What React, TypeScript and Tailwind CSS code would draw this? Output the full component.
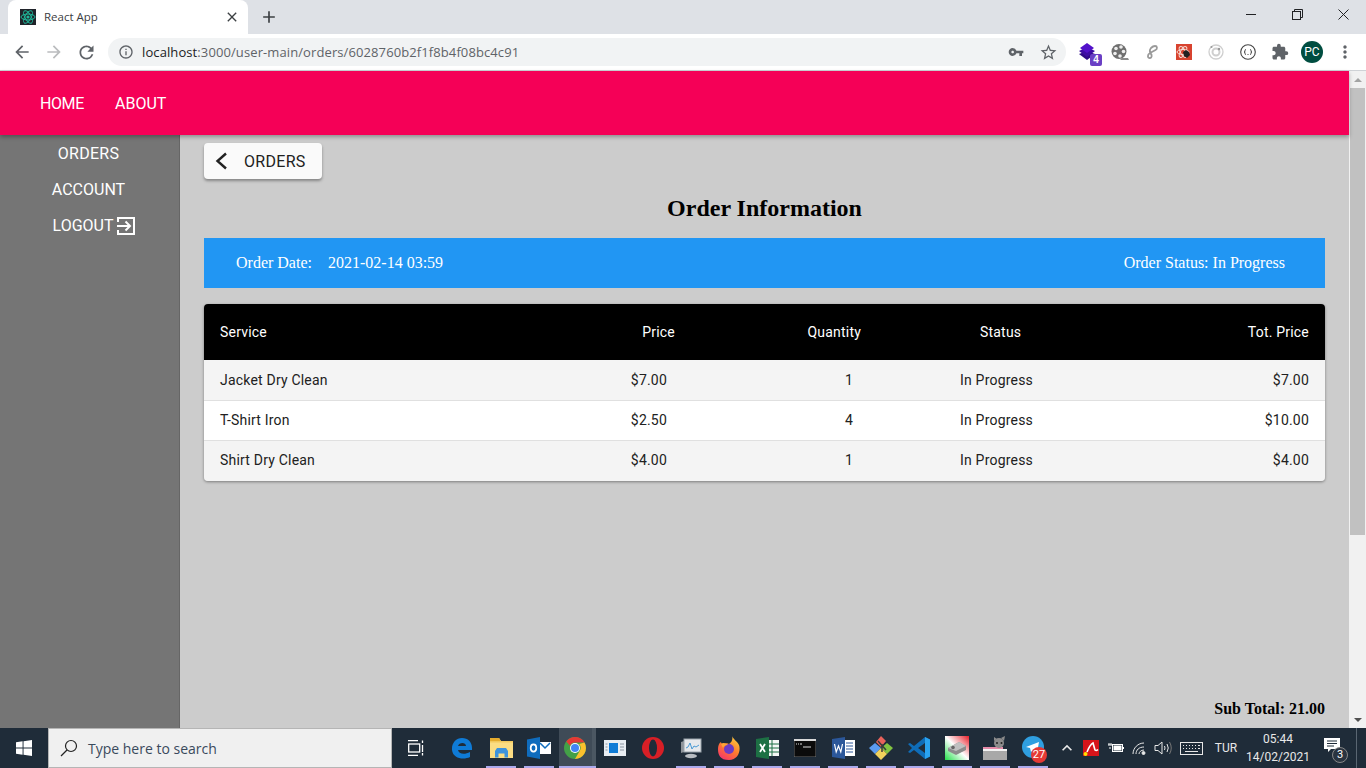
import React from "react";
import { MdArrowBack, MdArrowForward, MdRefresh, MdInfoOutline, MdVpnKey, MdStarBorder, MdExtension, MdMoreVert, MdClose, MdAdd, MdExpandLess } from "react-icons/md";

const rows = [
  { s: "Jacket Dry Clean", p: "$7.00", q: "1", st: "In Progress", t: "$7.00", cls: "h-[41px] bg-[#f4f4f4] border-b border-[#e0e0e0]" },
  { s: "T-Shirt Iron", p: "$2.50", q: "4", st: "In Progress", t: "$10.00", cls: "h-[40px] bg-white border-b border-[#e0e0e0]" },
  { s: "Shirt Dry Clean", p: "$4.00", q: "1", st: "In Progress", t: "$4.00", cls: "h-[40px] bg-[#f4f4f4] pb-[2px]" },
];
const grid = "grid grid-cols-[376px_111px_186px_223px_225px] items-center tracking-[0.2px]";

function ReactFav() {
  return (
    <svg width="16" height="16" viewBox="0 0 16 16" className="shrink-0">
      <rect width="16" height="16" fill="#20232a" />
      <g fill="none" stroke="#1fb89a" strokeWidth="1">
        <ellipse cx="8" cy="8" rx="7" ry="3" />
        <ellipse cx="8" cy="8" rx="7" ry="3" transform="rotate(60 8 8)" />
        <ellipse cx="8" cy="8" rx="7" ry="3" transform="rotate(120 8 8)" />
      </g>
      <circle cx="8" cy="8" r="1.6" fill="#1fb89a" />
    </svg>
  );
}

function TabBar() {
  return (
    <div className="h-[34px] bg-[#dee1e6] flex pl-[8px] shrink-0">
      <div className="w-[240px] h-[34px] bg-white rounded-t-[8px] flex items-center pl-[12px] pr-[8px]">
        <ReactFav />
        <span className="ml-[8px] text-[11.5px] text-[#3c4043] font-['Open_Sans','Noto_Sans',sans-serif] flex-1">React App</span>
        <MdClose size={16} className="text-[#3c4043]" />
      </div>
      <div className="h-[34px] flex items-center ml-[11px]">
        <MdAdd size={20} className="text-[#3c4043]" />
      </div>
      <div className="flex-1" />
      <div className="flex items-start text-[#202124]">
        <div className="w-[46px] h-[28px] flex items-center justify-center">
          <div className="w-[10px] h-px bg-[#202124]" />
        </div>
        <div className="w-[46px] h-[28px] flex items-center justify-center">
          <svg width="11" height="11" viewBox="0 0 11 11" fill="none" stroke="#202124">
            <rect x="0.5" y="2.5" width="8" height="8" />
            <path d="M2.5 2.5v-2h8v8h-2" />
          </svg>
        </div>
        <div className="w-[46px] h-[28px] flex items-center justify-center">
          <svg width="11" height="11" viewBox="0 0 11 11" stroke="#202124" fill="none">
            <path d="M0.5 0.5l10 10M10.5 0.5l-10 10" />
          </svg>
        </div>
      </div>
    </div>
  );
}

function Ext({ children, className = "w-[32px]" }: { children: React.ReactNode; className?: string }) {
  return <div className={"h-[36px] flex items-center justify-center relative " + className}>{children}</div>;
}

function Toolbar() {
  return (
    <div className="h-[36px] bg-white flex items-center shrink-0">
      <div className="w-[108px] flex items-center pl-[12px] gap-[12px] shrink-0">
        <MdArrowBack size={20} className="text-[#5f6368]" />
        <MdArrowForward size={20} className="text-[#babcbe]" />
        <MdRefresh size={21} className="text-[#5f6368]" />
      </div>
      <div className="w-[958px] h-[28px] rounded-full bg-[#f1f3f4] flex items-center pl-[10px] pr-[8px] shrink-0">
        <MdInfoOutline size={16} className="text-[#5f6368]" />
        <span className="ml-[8px] text-[13px] tracking-[0.1px] text-[#5f6368] font-['Open_Sans','Noto_Sans',sans-serif] flex-1 leading-none">
          <span className="text-[#202124]">localhost</span>:3000/user-main/orders/6028760b2f1f8b4f08bc4c91
        </span>
        <MdVpnKey size={16} className="text-[#5f6368] mr-[15px]" />
        <MdStarBorder size={19} className="text-[#5f6368]" />
      </div>
      <div className="flex items-center ml-[6px]">
        <Ext>
          <svg width="18" height="17" viewBox="0 0 18 17" className="-ml-[2px] -mt-[2px]">
            <path d="M9 8 17 11 9 17 1 11z" fill="#2e0a85" />
            <path d="M9 4 17 8 9 14 1 8z" fill="#3d0ca3" />
            <path d="M9 0 16 5 9 10 2 5z" fill="#5211c9" />
          </svg>
          <span className="absolute left-[18px] top-[20px] w-[12px] h-[12px] rounded-[2px] bg-[#6a3fc4] text-white text-[10px] font-bold leading-[12px] text-center font-['Liberation_Sans',sans-serif]">4</span>
        </Ext>
        <Ext>
          <svg width="18" height="18" viewBox="0 0 18 18">
            <path d="M11 15h6l1 2h-9z" fill="#8a8a8a" />
            <circle cx="8" cy="8.5" r="7.5" fill="#6f6f6f" />
            <circle cx="5" cy="5.500" r="1.800" fill="#eee" />
            <circle cx="10" cy="4" r="1.800" fill="#eee" />
            <circle cx="4" cy="10.500" r="1.800" fill="#eee" />
            <circle cx="9" cy="13" r="1.800" fill="#eee" />
            <circle cx="12.500" cy="8.500" r="1.800" fill="#eee" />
          </svg>
        </Ext>
        <Ext>
          <svg width="14" height="16" viewBox="0 0 14 16" fill="none" stroke="#9a9a9a" strokeWidth="1.8">
            <path d="M10 2c2.500 0 2.500 3 .5 4L5 9c-3 1.500-2.500 5.500 0 5 2-.3 2-3 1-4-1.500-2-2-3.500 0-6 1-1 2.500-2 4-2z" />
          </svg>
        </Ext>
        <Ext>
          <svg width="16" height="16" viewBox="0 0 16 16">
            <rect width="16" height="16" fill="#d8432f" />
            <g fill="none" stroke="#f6d9d2" strokeWidth="1">
              <ellipse cx="7" cy="8" rx="6" ry="2.500" />
              <ellipse cx="7" cy="8" rx="6" ry="2.500" transform="rotate(60 7 8)" />
              <ellipse cx="7" cy="8" rx="6" ry="2.500" transform="rotate(120 7 8)" />
            </g>
            <path d="M7 8l3-2 3 2 1 3-3 3-3-2z" fill="#222" />
          </svg>
        </Ext>
        <Ext>
          <svg width="16" height="16" viewBox="0 0 16 16" fill="none" stroke="#cfcfcf">
            <circle cx="8" cy="8" r="7" strokeWidth="1.3" />
            <circle cx="8" cy="8" r="3.500" strokeWidth="2" />
            <circle cx="11" cy="5" r="1.200" fill="#999" stroke="none" />
            <circle cx="3.500" cy="3" r="1" fill="#999" stroke="none" />
          </svg>
        </Ext>
        <Ext>
          <svg width="16" height="16" viewBox="0 0 16 16" fill="none" stroke="#444">
            <circle cx="8" cy="8" r="7.3" strokeWidth="1.1" />
            <path d="M6 5.500q-1 0-1 1v1l-1 .5 1 .5v1q0 1 1 1M10 5.500q1 0 1 1v1l1 .5-1 .5v1q0 1-1 1M7 10.500h.5M8.500 10.500h.5" strokeWidth="1" />
          </svg>
        </Ext>
        <Ext><MdExtension size={18} className="text-[#5f6368]" /></Ext>
        <Ext>
          <div className="w-[22px] h-[22px] rounded-full bg-[#004d40] text-white text-[12px] flex items-center justify-center font-['Roboto',sans-serif]">PC</div>
        </Ext>
        <Ext className="w-[34px]"><MdMoreVert size={20} className="text-[#5f6368]" /></Ext>
      </div>
    </div>
  );
}

function Sidebar() {
  const item = "h-[36px] flex items-center justify-center text-white text-[16px]";
  return (
    <div className="w-[180px] shrink-0 bg-[#757575] border-r border-[#666] pr-[2px] pt-px flex flex-col">
      <div className={item + " tracking-[0.3px]"}>ORDERS</div>
      <div className={item}>ACCOUNT</div>
      <div className={item + " pl-[12px]"}>
        LOGOUT
        <svg width="20" height="20" viewBox="0 0 20 20" fill="none" stroke="#fff" strokeWidth="2" className="ml-[3px]">
          <path d="M2 6V2h16v16H2v-4" />
          <path d="M1 10h13M9.500 5.500 14 10l-4.500 4.500" />
        </svg>
      </div>
    </div>
  );
}

function Content() {
  return (
    <div className="flex-1 bg-[#cccccc] px-[24px] pt-[8px] flex flex-col font-['Liberation_Serif',serif]">
      <div className="w-[118px] h-[36px] bg-[#fafafa] rounded-[4px] shadow-[0_2px_3px_rgba(0,0,0,0.35)] flex items-center pl-[10px] font-['Roboto',sans-serif] text-[16px]">
        <svg width="14" height="18" viewBox="0 0 14 18" fill="none" stroke="#222" strokeWidth="2.4"><path d="M12 1.500 3.500 9 12 16.500" /></svg>
        <span className="ml-[16px] pt-[2px] text-[#212121] tracking-[0.3px]">ORDERS</span>
      </div>
      <h1 className="text-center text-[24px] font-bold text-black leading-[28px] mt-[15px]">Order Information</h1>
      <div className="mt-[16px] h-[50px] bg-[#2196f3] text-white text-[16px] flex items-center pl-[32px] pr-[40px]">
        <span>Order Date:</span>
        <span className="ml-[16px]">2021-02-14 03:59</span>
        <span className="ml-auto">Order Status: In Progress</span>
      </div>
      <div className="mt-[16px] rounded-[4px] overflow-hidden shadow-[0_1px_3px_rgba(0,0,0,0.4)] font-['Roboto',sans-serif] text-[14px]">
        <div className={grid + " h-[56px] bg-black text-white"}>
          <div className="pl-[16px]">Service</div>
          <div className="text-right pr-[16px]">Price</div>
          <div className="text-right pr-[16px]">Quantity</div>
          <div className="pl-[103px]">Status</div>
          <div className="text-right pr-[16px]">Tot. Price</div>
        </div>
        {rows.map((r) => (
          <div key={r.s} className={grid + " text-[#212121] " + r.cls}>
            <div className="pl-[16px]">{r.s}</div>
            <div className="text-right pr-[24px]">{r.p}</div>
            <div className="text-right pr-[24px]">{r.q}</div>
            <div className="pl-[83px]">{r.st}</div>
            <div className="text-right pr-[16px]">{r.t}</div>
          </div>
        ))}
      </div>
      <div className="mt-auto mb-[10px] text-right text-[16px] font-bold text-black leading-[18px]">Sub Total: 21.00</div>
    </div>
  );
}

function Scrollbar() {
  return (
    <div className="w-[17px] shrink-0 bg-[#f1f1f1] flex flex-col items-center">
      <div className="h-[17px] flex items-center justify-center">
        <div className="w-0 h-0 border-x-[4px] border-x-transparent border-b-[4px] border-b-[#a3a3a3]" />
      </div>
      <div className="w-[15px] h-[447px] bg-[#c1c1c1]" />
      <div className="flex-1" />
      <div className="h-[17px] flex items-center justify-center">
        <div className="w-0 h-0 border-x-[4px] border-x-transparent border-t-[4px] border-t-[#505050]" />
      </div>
    </div>
  );
}

function Slot({ on, active, w = 38, children }: { on?: boolean; active?: boolean; w?: number; children: React.ReactNode }) {
  return (
    <div style={{ width: w }} className={"h-[40px] flex items-center justify-center relative shrink-0 " + (active ? "bg-[#3f4b57]" : "")}>
      {children}
      {active && <div className="absolute top-0 bottom-0 right-0 w-[4px] bg-[#4b5762]" />}
      {on && <div className={"absolute bottom-0 h-[2px] bg-[#aaa9ec] " + (active ? "left-0 right-0" : "left-[4px] right-[4px]")} />}
    </div>
  );
}

function Taskbar() {
  return (
    <div className="h-[40px] bg-[#1f2c39] flex items-center shrink-0 text-white">
      <div className="w-[48px] h-[40px] flex items-center justify-center">
        <svg width="16" height="16" viewBox="0 0 17 17" fill="#fff"><path d="M0 2.400 7 1.400v6.700H0zM8 1.300 17 0v8.100H8zM0 9h7v6.700l-7-1zM8 9h9v8l-9-1.300z" /></svg>
      </div>
      <div className="w-[344px] h-[40px] bg-[#f0f0f0] border border-[#b5b5b5] flex items-center pl-[11px] text-[#3a4a5c] text-[14px] font-['Open_Sans','Noto_Sans',sans-serif]">
        <svg width="18" height="18" viewBox="0 0 18 18" fill="none" stroke="#222" strokeWidth="1.2"><circle cx="11" cy="7" r="5.500" /><path d="M7 11 1 17" /></svg>
        <span className="ml-[10px]">Type here to search</span>
      </div>
      <div className="flex items-center pl-[5px]">
        <Slot>
          <svg width="18" height="16" viewBox="0 0 18 16" fill="none" stroke="#fff" strokeWidth="1.3"><path d="M1 .7h10M1 15.300h10" /><rect x="1.700" y="4" width="11" height="8" /><path d="M15.500.5v2.500M15.500 5v7M15.500 13v2.500" /></svg>
        </Slot>
        <div className="w-[9px]" />
        <Slot>
          <svg width="22" height="22" viewBox="0 0 22 22" className="-ml-[2px]"><path d="M11 1c6 0 10 4 10 10v2H7c.5 4 6.500 5 12 2v5c-6 3-17 2-18-7C.5 6 5 1 11 1zm4 8c0-4-7-4-8 0z" fill="#0f7bd6" /></svg>
        </Slot>
        <Slot on>
          <svg width="23" height="20" viewBox="0 0 23 20">
            <path d="M0 0h9l2 3h12v17H0z" fill="#fbdd83" />
            <path d="M0 0h9l2 3H0z" fill="#e5ac2e" />
            <path d="M0 3h23v1.500H0z" fill="#f2c95c" />
            <path d="M5 19.500v-6.500l2-3h9l2 3v6.500h-3.500v-4h-6v4z" fill="#3d93dc" />
          </svg>
        </Slot>
        <Slot on>
          <svg width="24" height="22" viewBox="0 0 24 22">
            <rect x="12" y="5" width="12" height="12" fill="#fff" />
            <path d="M13 6l5 5 5-5" stroke="#0f6cbd" strokeWidth="1.500" fill="none" />
            <path d="M0 2.500 13 0v22L0 19.500z" fill="#0f6cbd" />
            <ellipse cx="6.500" cy="11" rx="2.800" ry="3.600" fill="none" stroke="#fff" strokeWidth="1.700" />
          </svg>
        </Slot>
        <div className="w-px" />
        <Slot on active w={37}>
          <svg width="22" height="22" viewBox="0 0 22 22" className="-ml-[6px] relative z-10">
            <circle cx="11" cy="11" r="11" fill="#43a047" />
            <path d="M11 0a11 11 0 0 1 9.530 5.500H11a5.500 5.500 0 0 0-5 3.200L2.300 4.500A11 11 0 0 1 11 0z" fill="#e53935" />
            <path d="M20.500 5.500A11 11 0 0 1 11 22l4.800-8.300A5.500 5.500 0 0 0 15 7z" fill="#fbc02d" />
            <circle cx="11" cy="11" r="5" fill="#fff" />
            <circle cx="11" cy="11" r="4" fill="#4285f4" />
          </svg>
        </Slot>
        <Slot>
          <svg width="22" height="16" viewBox="0 0 22 16"><rect width="22" height="16" fill="#e8edf2" /><rect x="5" y="3" width="9" height="10" fill="#0f7bd6" /><path d="M16 4h4M16 7h4M16 10h4M1.500 4h2M1.500 7h2M1.500 10h2" stroke="#8a94a0" /></svg>
        </Slot>
        <Slot>
          <svg width="22" height="22" viewBox="0 0 22 22"><circle cx="11" cy="11" r="11" fill="#d81f26" /><ellipse cx="11" cy="11" rx="4" ry="8.500" fill="#1f2c39" /></svg>
        </Slot>
        <Slot on>
          <svg width="22" height="22" viewBox="0 0 22 22">
            <path d="M1 5l3-1v11l-3 1z" fill="#8e949a" />
            <rect x="4" y="2" width="17" height="13" fill="#e6e9ec" stroke="#9aa3ab" />
            <path d="M6 11l2-1 2-4 2 6 2-3 2 1 3-2" stroke="#4a9ad4" fill="none" />
            <ellipse cx="11" cy="19" rx="6" ry="2.200" fill="#b8bdc2" />
          </svg>
        </Slot>
        <Slot on>
          <svg width="22" height="24" viewBox="0 0 22 24">
            <defs>
              <linearGradient id="ff" x1="0.800" y1="0" x2="0.200" y2="1">
                <stop offset="0" stopColor="#ffd03f" />
                <stop offset=".5" stopColor="#ff7b2e" />
                <stop offset="1" stopColor="#f7336c" />
              </linearGradient>
            </defs>
            <path d="M14 0c1 3 5 5 7 9 2 6-1 15-10 15S0 19 0 13c0-3 1-6 3-7 0 1 1 2 2 2 2-1 5-1 6 0 3-2 4-5 3-8z" fill="url(#ff)" />
            <circle cx="11" cy="13" r="5" fill="#6d3bc4" />
            <path d="M3 8c2-2 5-1 7 1-3 0-4 1-5 3z" fill="#ffa436" />
          </svg>
        </Slot>
        <Slot on>
          <svg width="23" height="22" viewBox="0 0 23 22">
            <rect x="10" y="3" width="13" height="16" fill="#f4f7f5" />
            <path d="M16 3v16M10 7h13M10 11h13M10 15h13" stroke="#1d7044" />
            <path d="M0 2 13 0v22L0 20z" fill="#1d7044" />
            <path d="M4 7l5 8M9 7l-5 8" stroke="#fff" strokeWidth="1.800" />
          </svg>
        </Slot>
        <Slot on>
          <svg width="22" height="18" viewBox="0 0 22 18">
            <rect width="22" height="18" fill="#0b0b0b" stroke="#aaa" strokeWidth=".6" />
            <rect width="22" height="2" fill="#d9d9d9" />
            <path d="M2 5h1M4 5h1M6 5h2M9 8h8" stroke="#ddd" />
          </svg>
        </Slot>
        <Slot on>
          <svg width="23" height="22" viewBox="0 0 23 22">
            <rect x="9" y="3" width="14" height="16" fill="#fff" />
            <path d="M14 6h7M14 9h7M14 12h7M14 15h7" stroke="#2b579a" />
            <path d="M0 2 13 0v22L0 20z" fill="#2b579a" />
            <path d="M2.500 7l1.700 8L6.500 9l2.300 6 1.700-8" stroke="#fff" strokeWidth="1.200" fill="none" />
          </svg>
        </Slot>
        <Slot on>
          <svg width="24" height="24" viewBox="0 0 24 24">
            <path d="M6 7l6 5-6 6-6-6z" fill="#5b9bf0" />
            <path d="M18 7l6 5-6 6-6-6z" fill="#82c341" />
            <path d="M12 12l6 6-6 6-6-6z" fill="#f2d25c" />
            <path d="M7 6l5-6 5 5-5 6z" fill="#e8625b" />
            <path d="M9 5l8 9M13 8v8" stroke="#3a3a3a" strokeWidth="1.500" fill="none" />
          </svg>
        </Slot>
        <Slot on>
          <svg width="24" height="24" viewBox="0 0 24 24">
            <path fillRule="evenodd" d="M18 1 7 10 3 7 1 8l4 4-4 4 2 1 4-3 11 9 5-2.500v-17zM18 7v10l-7-5z" fill="#0f6db8" />
            <path d="M18 1l5 2.500v17L18 23z" fill="#2aa3f0" />
          </svg>
        </Slot>
        <Slot on>
          <svg width="24" height="24" viewBox="0 0 24 24">
            <defs>
              <linearGradient id="g" x1="0" y1="1" x2="1" y2="0">
                <stop offset="0" stopColor="#22e04a" />
                <stop offset=".5" stopColor="#fff" />
                <stop offset="1" stopColor="#e8202a" />
              </linearGradient>
            </defs>
            <rect width="24" height="24" fill="url(#g)" />
            <path d="M3 12l11-6 7 4v4l-10 5-8-4z" fill="#8c8c8c" />
            <path d="M3 12l11-6 7 4-10 5z" fill="#c0c0c0" />
            <circle cx="8" cy="11.500" r="1.800" fill="#666" />
          </svg>
        </Slot>
        <Slot on>
          <svg width="24" height="24" viewBox="0 0 24 24">
            <rect y="13" width="24" height="11" fill="#a8a8a8" />
            <rect y="13" width="24" height="2" fill="#f2f2f2" />
            <rect y="11" width="20" height="2" fill="#e58aa8" />
            <circle cx="16" cy="7" r="5" fill="#8b8b8b" />
            <path d="M11 5l0-4 3 2M21 5l1-5-4 2" fill="#8b8b8b" />
            <circle cx="14" cy="7" r="1" fill="#222" />
            <circle cx="18.500" cy="7" r="1" fill="#222" />
          </svg>
        </Slot>
        <Slot on>
          <svg width="22" height="22" viewBox="0 0 22 22" className="-mt-[2px]">
            <circle cx="11" cy="11" r="11" fill="#2f9fe0" />
            <path d="M4 11l13-5-2 11-4-3-2 2-1-4z" fill="#fff" />
          </svg>
          <span className="absolute left-[17px] top-[19px] w-[16px] h-[16px] rounded-full bg-[#e53935] text-white text-[11px] leading-[16px] text-center font-['Roboto',sans-serif]">27</span>
        </Slot>
      </div>
      <div className="flex-1" />
      <div className="flex items-center h-[40px] font-['Roboto',sans-serif] text-[#e8e8e8]">
        <div className="w-[22px] flex justify-center"><MdExpandLess size={20} /></div>
        <div className="w-[26px] flex justify-center">
          <svg width="16" height="16" viewBox="0 0 16 16"><rect width="16" height="16" fill="#d7141a" /><path d="M4 12C6 7 8 4 10 3l2 7c1 1 2 .5 3-.5" fill="none" stroke="#fff" strokeWidth="1.6" /><circle cx="2.500" cy="14" r="2" fill="#ffe000" /></svg>
        </div>
        <div className="w-[24px] flex justify-center">
          <svg width="18" height="12" viewBox="0 0 18 12" fill="none" stroke="#fff"><path d="M1 3h4M2 1v2M4 1v2M3 5v2" /><rect x="5.500" y="2.500" width="10" height="7" /><rect x="7" y="4" width="7" height="4" fill="#fff" /><path d="M16.500 5v2" /></svg>
        </div>
        <div className="w-[24px] flex justify-center">
          <svg width="16" height="14" viewBox="0 0 16 14" fill="none" stroke="#e8e8e8"><path d="M1 13C1 7 6 2 12 2M4 13c0-4 3-7 8-7M7 13c0-2 2-4 5-4" /><circle cx="11.500" cy="12" r="1.500" fill="#e8e8e8" /></svg>
        </div>
        <div className="w-[22px] flex justify-center">
          <svg width="18" height="14" viewBox="0 0 18 14" fill="none" stroke="#e8e8e8"><path d="M1 4.500h3L8 1v12L4 9.500H1z" /><path d="M10.500 5q1 2 0 4M13 3q2.500 4 0 8" /><path d="M15.500 1q3.500 6 0 12" stroke="#777" /></svg>
        </div>
        <div className="w-[34px] flex justify-center">
          <svg width="23" height="13" viewBox="0 0 23 13" fill="none" stroke="#e8e8e8"><rect x=".5" y=".5" width="22" height="12" /><path d="M3 3.500h1M6 3.500h1M9 3.500h1M12 3.500h1M15 3.500h1M18 3.500h2M3 6.500h1M6 6.500h1M9 6.500h1M12 6.500h1M15 6.500h1M18 6.500h2M5 9.500h13" /></svg>
        </div>
        <div className="w-[36px] text-center text-[12px]">TUR</div>
        <div className="w-[68px] text-center text-[12px] leading-[18px]">
          <div>05:44</div>
          <div>14/02/2021</div>
        </div>
        <div className="w-[44px] h-[40px] flex justify-center items-center relative pr-[4px]">
          <svg width="16" height="15" viewBox="0 0 16 15" className="-mt-[6px]"><path d="M0 0h16v11H7l-3 3v-3H0z" fill="#fff" /><path d="M3 3h10M3 5.500h10M3 8h7" stroke="#1f2c39" /></svg>
          <span className="absolute left-[20px] top-[19px] w-[16px] h-[16px] rounded-full bg-[#2a3440] border border-[#888] text-white text-[11px] leading-[14px] text-center">3</span>
        </div>
        <div className="w-[10px] h-[40px] border-l border-[#5a6672]" />
      </div>
    </div>
  );
}

export default function App() {
  return (
    <div className="w-[1366px] h-[768px] overflow-hidden flex flex-col font-['Roboto',sans-serif]">
      <TabBar />
      <Toolbar />
      <div className="h-px bg-[#cfd2d6] shrink-0" />
      <div className="flex-1 flex min-h-0">
        <div className="flex-1 flex flex-col min-w-0">
          <div className="h-[64px] shrink-0 bg-[#f50057] flex items-center pl-[40px] pt-[2px] text-white text-[16px] relative z-10 shadow-[0_2px_4px_rgba(0,0,0,0.3)]">
            <span className="w-[75px] tracking-[-0.4px]">HOME</span>
            <span>ABOUT</span>
          </div>
          <div className="flex-1 flex min-h-0">
            <Sidebar />
            <Content />
          </div>
        </div>
        <Scrollbar />
      </div>
      <Taskbar />
    </div>
  );
}
